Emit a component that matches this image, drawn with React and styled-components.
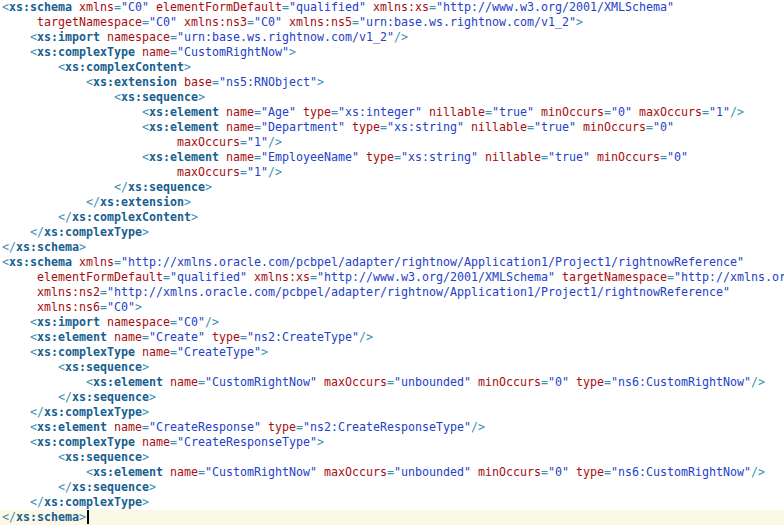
import React from 'react';
import styled, { createGlobalStyle } from 'styled-components';

const GlobalStyle = createGlobalStyle`
  html, body {
    margin: 0;
    padding: 0;
    background: #ffffff;
  }
`;

const Editor = styled.div`
  width: 784px;
  height: 526px;
  overflow: hidden;
  background: #ffffff;
  font-family: 'DejaVu Sans Mono', 'Liberation Mono', monospace;
  font-size: 11.63px;
  line-height: 15px;
`;

const Line = styled.div`
  height: 15px;
  padding-left: 2px;
  white-space: pre;
  background: ${(p) => (p.$current ? '#fcf8e6' : 'transparent')};
`;

const Bracket = styled.span`
  color: #3c8fb5;
`;

const TagName = styled.span`
  color: #17608f;
  font-weight: bold;
`;

const AttrName = styled.span`
  color: #a50d10;
`;

const Eq = styled.span`
  color: #3c8fb5;
`;

const Value = styled.span`
  color: #2341c7;
`;

const Caret = styled.span`
  display: inline-block;
  width: 2px;
  height: 14px;
  margin-left: 1px;
  vertical-align: -3px;
  background: #000000;
`;

const ORA = 'http://xmlns.oracle.com/pcbpel/adapter/rightnow/Application1/Project1/rightnowReference';

const lines = [
  '<xs:schema xmlns="C0" elementFormDefault="qualified" xmlns:xs="http://www.w3.org/2001/XMLSchema"',
  '     targetNamespace="C0" xmlns:ns3="C0" xmlns:ns5="urn:base.ws.rightnow.com/v1_2">',
  '    <xs:import namespace="urn:base.ws.rightnow.com/v1_2"/>',
  '    <xs:complexType name="CustomRightNow">',
  '        <xs:complexContent>',
  '            <xs:extension base="ns5:RNObject">',
  '                <xs:sequence>',
  '                    <xs:element name="Age" type="xs:integer" nillable="true" minOccurs="0" maxOccurs="1"/>',
  '                    <xs:element name="Department" type="xs:string" nillable="true" minOccurs="0"',
  '                         maxOccurs="1"/>',
  '                    <xs:element name="EmployeeName" type="xs:string" nillable="true" minOccurs="0"',
  '                         maxOccurs="1"/>',
  '                </xs:sequence>',
  '            </xs:extension>',
  '        </xs:complexContent>',
  '    </xs:complexType>',
  '</xs:schema>',
  `<xs:schema xmlns="${ORA}"`,
  `     elementFormDefault="qualified" xmlns:xs="http://www.w3.org/2001/XMLSchema" targetNamespace="${ORA}"`,
  `     xmlns:ns2="${ORA}"`,
  '     xmlns:ns6="C0">',
  '    <xs:import namespace="C0"/>',
  '    <xs:element name="Create" type="ns2:CreateType"/>',
  '    <xs:complexType name="CreateType">',
  '        <xs:sequence>',
  '            <xs:element name="CustomRightNow" maxOccurs="unbounded" minOccurs="0" type="ns6:CustomRightNow"/>',
  '        </xs:sequence>',
  '    </xs:complexType>',
  '    <xs:element name="CreateResponse" type="ns2:CreateResponseType"/>',
  '    <xs:complexType name="CreateResponseType">',
  '        <xs:sequence>',
  '            <xs:element name="CustomRightNow" maxOccurs="unbounded" minOccurs="0" type="ns6:CustomRightNow"/>',
  '        </xs:sequence>',
  '    </xs:complexType>',
  '</xs:schema>',
];

// split one line of xml into coloured pieces
function tokenize(text) {
  const re = /(<\/?)([\w:]+)|("[^"]*")|([\w:]+)(=)|(\/?>)|(\s+)/g;
  const out = [];
  let m;
  let k = 0;
  while ((m = re.exec(text))) {
    if (m[1]) {
      out.push(<Bracket key={k++}>{m[1]}</Bracket>);
      out.push(<TagName key={k++}>{m[2]}</TagName>);
    } else if (m[3]) {
      out.push(<Value key={k++}>{m[3]}</Value>);
    } else if (m[4]) {
      out.push(<AttrName key={k++}>{m[4]}</AttrName>);
      out.push(<Eq key={k++}>{m[5]}</Eq>);
    } else if (m[6]) {
      out.push(<Bracket key={k++}>{m[6]}</Bracket>);
    } else {
      out.push(m[7]);
    }
  }
  return out;
}

export default function App() {
  const last = lines.length - 1;
  return (
    <>
      <GlobalStyle />
      <Editor>
        {lines.map((l, i) => (
          <Line key={i} $current={i === last}>
            {tokenize(l)}
            {i === last && <Caret />}
          </Line>
        ))}
      </Editor>
    </>
  );
}
